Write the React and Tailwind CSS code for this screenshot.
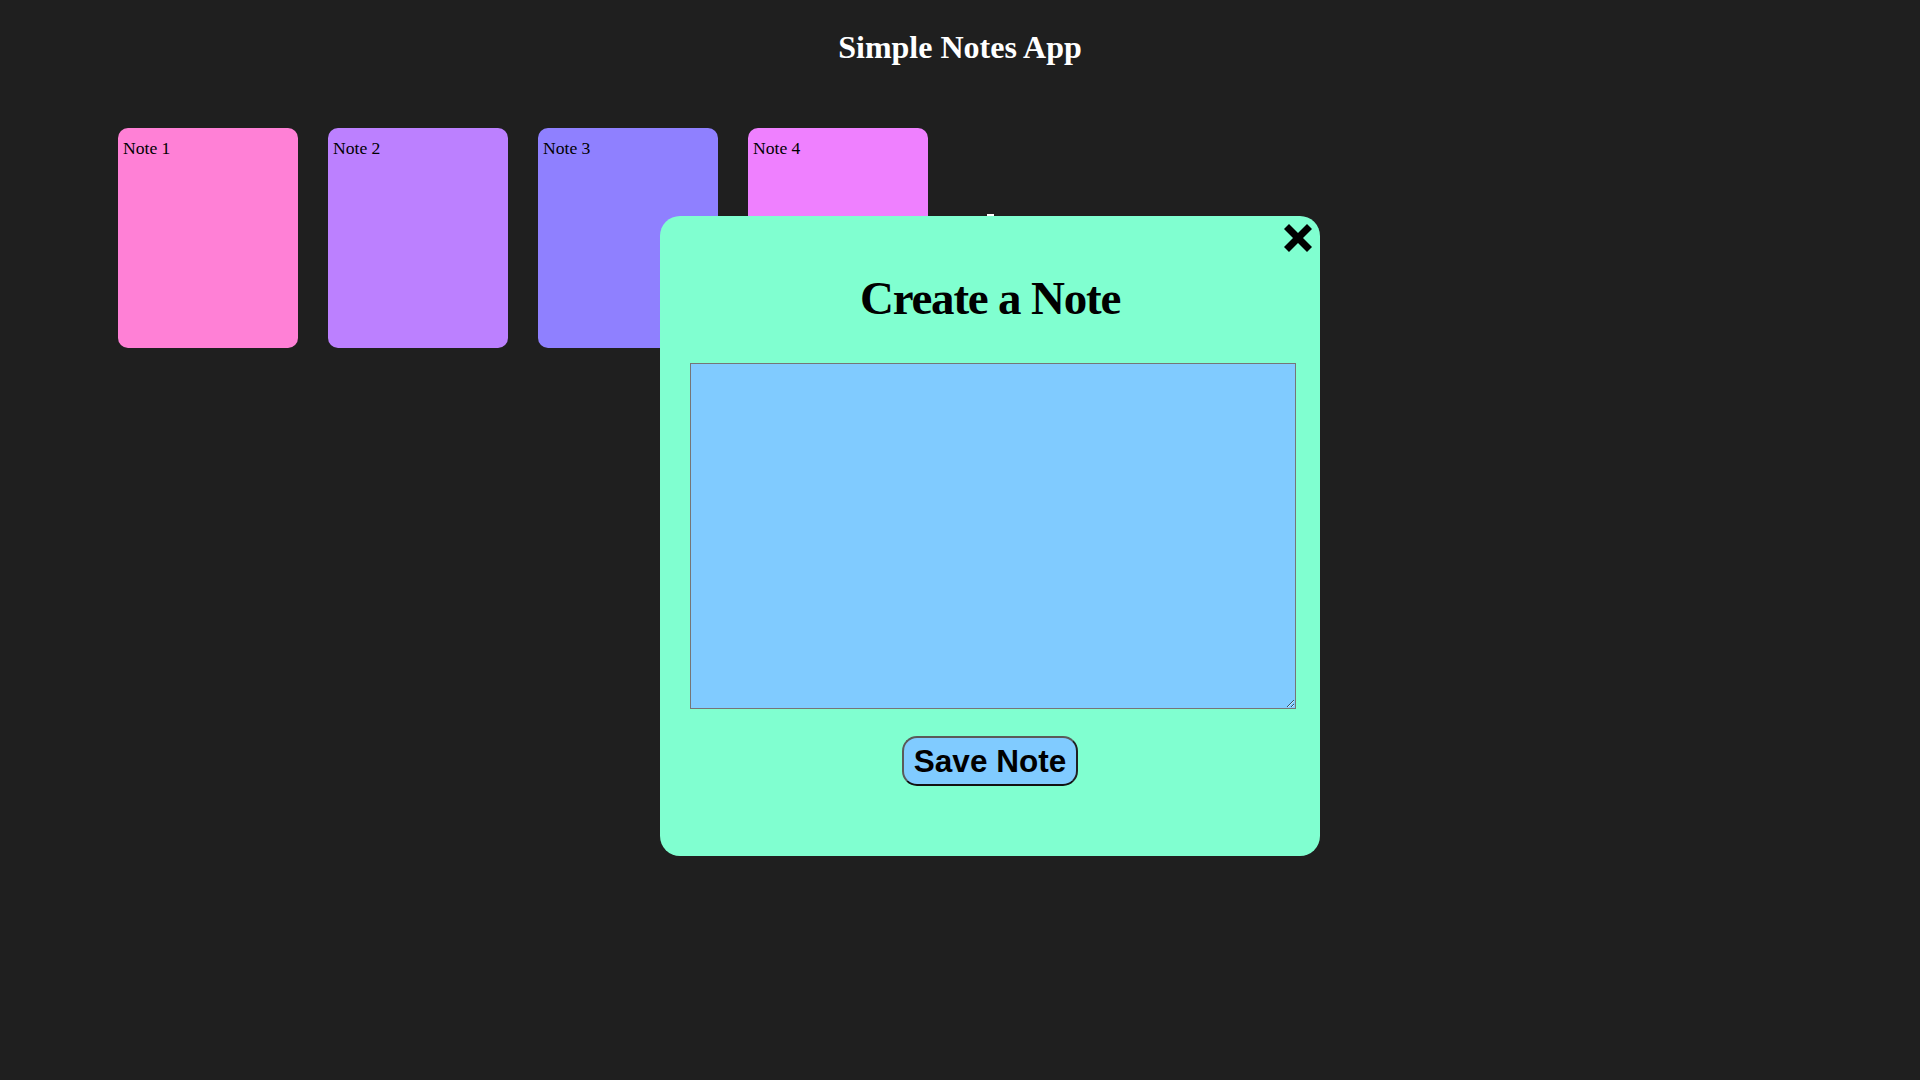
import { useState } from 'react';

const NOTES = [
  { id: 1, title: 'Note 1', color: 'bg-[#ff80d6]' },
  { id: 2, title: 'Note 2', color: 'bg-[#bc80ff]' },
  { id: 3, title: 'Note 3', color: 'bg-[#8f80ff]' },
  { id: 4, title: 'Note 4', color: 'bg-[#ef80ff]' },
];

function CloseIcon() {
  return (
    <svg width="30" height="30" viewBox="0 0 30 30" aria-hidden="true">
      <line x1="3.5" y1="3.5" x2="26.5" y2="26.5" stroke="#000" strokeWidth="7" />
      <line x1="26.5" y1="3.5" x2="3.5" y2="26.5" stroke="#000" strokeWidth="7" />
    </svg>
  );
}

export default function App() {
  const [text, setText] = useState('');
  const [open, setOpen] = useState(true);

  return (
    <div className="relative min-h-screen h-[1080px] w-full bg-[#1f1f1f] font-['Liberation_Serif',serif] overflow-hidden">
      <h1 className="pt-[29px] text-center text-[32px] leading-[36px] font-bold text-white">Simple Notes App</h1>

      <div className="mt-[63px] pl-[118px] flex gap-[30px]">
        {NOTES.map((note) => (
          <div key={note.id} className={`w-[180px] h-[220px] rounded-[10px] pl-[5px] pt-[10px] ${note.color}`}>
            <p className="text-[17.6px] leading-[20px] text-black">{note.title}</p>
          </div>
        ))}
      </div>

      {/* add button peeking out behind the modal */}
      <span className="absolute left-[987px] top-[214px] w-[7px] h-[4px] bg-white" />

      {open && (
        <div className="absolute left-[660px] top-[216px] w-[660px] h-[640px] rounded-[20px] bg-[#80ffd0] p-[30px] flex flex-col items-start">
          <button
            onClick={() => setOpen(false)}
            className="absolute right-[7px] top-[7px] w-[30px] h-[30px] flex items-center justify-center"
            aria-label="Close"
          >
            <CloseIcon />
          </button>

          <h2 className="mt-[26px] w-[600px] text-center text-[47px] leading-[52px] tracking-[-1.2px] font-bold text-black">
            Create a Note
          </h2>

          <textarea
            value={text}
            onChange={(event) => setText(event.target.value)}
            className="mt-[39px] w-[606px] h-[346px] shrink-0 border border-[#767676] bg-[#80cbff] p-[2px] text-[13px] outline-none resize"
          />

          <div className="w-[600px] flex justify-center mt-[27px]">
            <button className="px-[10px] py-[5px] rounded-[15px] border-2 border-[#5a5a5a] border-r-[#202020] border-b-[#111] bg-[#80cbff] font-['Liberation_Sans',Arial,sans-serif] font-bold text-[31.5px] leading-[36px] text-black">
              Save Note
            </button>
          </div>
        </div>
      )}
    </div>
  );
}
